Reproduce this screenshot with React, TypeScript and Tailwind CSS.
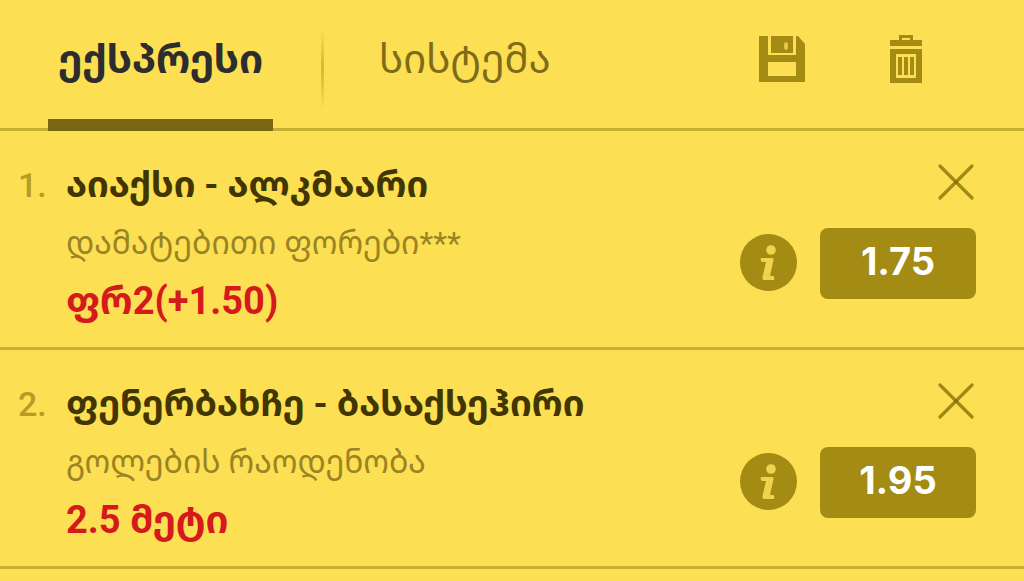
import React from "react";

interface IBet {
  id: number;
  match: string;
  market: string;
  pick: string;
  odds: string;
}

const bets: IBet[] = [
  { id: 1, match: "აიაქსი - ალკმაარი", market: "დამატებითი ფორები***", pick: "ფრ2(+1.50)", odds: "1.75" },
  { id: 2, match: "ფენერბახჩე - ბასაქსეჰირი", market: "გოლების რაოდენობა", pick: "2.5 მეტი", odds: "1.95" },
];

const SaveIcon: React.FC = (): JSX.Element => (
  <svg width="46" height="46" viewBox="0 0 46 46" fill="#a38b14" aria-hidden="true">
    <path fillRule="evenodd" d="M0 0H9V19H37V0H39L46 8V46H0ZM9 26V40H37V26Z" />
    <path d="M12 0H34V17H12Z" />
    <ellipse cx="27" cy="10" rx="2" ry="4" fill="#e5c945" />
  </svg>
);

const TrashIcon: React.FC = (): JSX.Element => (
  <svg width="32" height="48" viewBox="0 0 32 48" fill="#a38b14" aria-hidden="true">
    <path fillRule="evenodd" d="M9 0H23V5H32V11H0V5H9ZM12 3V5H20V3Z" />
    <path fillRule="evenodd" d="M0 14H32V48H0ZM6 19V43H26V19Z" />
    <path d="M8 22H12V40H8ZM14 22H18V40H14ZM20 22H24V40H20Z" />
  </svg>
);

const InfoIcon: React.FC = (): JSX.Element => (
  <svg width="58" height="58" viewBox="0 0 58 58" aria-hidden="true">
    <circle cx="28.5" cy="28.5" r="28.5" fill="#a38b14" />
    <circle cx="31" cy="16" r="4.8" fill="#f0d34d" />
    <path d="M21 24H32Q34 24 33.500 26L30 42H33Q35 42 34 46H24Q22 46 22.500 43L26 28H22Q20 27 21 24Z" fill="#f0d34d" />
  </svg>
);

const CloseIcon: React.FC = (): JSX.Element => (
  <svg width="38" height="36" viewBox="0 0 38 36" fill="none" stroke="#a08914" strokeWidth="3.2" strokeLinecap="round" aria-hidden="true">
    <path d="M2 2L34 34M34 2L2 34" />
    <circle cx="18" cy="18" r="1.5" fill="#85710c" stroke="#85710c" strokeWidth="1" />
  </svg>
);

const BetRow: React.FC<IBet> = (props): JSX.Element => {
  return (
    <li className="flex h-[219px] border-b-[3px] border-[#c9b033] pr-12 pt-8">
      <div className="w-[66px] shrink-0 pl-[18px] text-[34px] leading-[44px] font-medium text-[#b59d25]">{props.id}.</div>
      <div className="min-w-0 flex-1">
        <h2 className="text-[36px] leading-[44px] font-bold whitespace-nowrap text-[#423600]">{props.match}</h2>
        <p className="mt-4 text-[32px] leading-[40px] whitespace-nowrap text-[#9a8424]">{props.market}</p>
        <p className="mt-4 text-[38px] leading-[44px] font-bold whitespace-nowrap text-[#d41a1c]">{props.pick}</p>
      </div>
      <div className="flex shrink-0 flex-col items-end">
        <button type="button" aria-label="წაშლა" className="mt-px">
          <CloseIcon />
        </button>
        <div className="mt-7 flex items-start gap-[22px]">
          <button type="button" aria-label="ინფო" className="pt-1.5">
            <InfoIcon />
          </button>
          <button type="button" className="h-[71px] w-[156px] rounded-lg bg-[#a38b14] pb-1 font-[Inter,sans-serif] text-[38px] font-bold text-white">
            {props.odds}
          </button>
        </div>
      </div>
    </li>
  );
};

const App: React.FC = (): JSX.Element => {
  return (
    <main className="min-h-screen bg-[#fddf53] font-[Roboto,'Noto_Sans_Georgian','DejaVu_Sans',sans-serif]">
      <header className="flex h-[131px] border-b-[3px] border-[#c9b033] pl-12">
        <nav className="flex flex-1">
          <button type="button" className="-mb-[3px] w-[225px] border-b-[12px] border-[#796612] text-[40px] font-bold text-[#2d2d2d]">
            ექსპრესი
          </button>
          <div className="mt-7 ml-12 h-[82px] w-[3px] bg-linear-to-b from-transparent via-[#d9b820] to-transparent" />
          <button type="button" className="ml-[55px] pb-2 text-[40px] text-[#7f6b18]">
            სისტემა
          </button>
        </nav>
        <div className="flex items-center gap-[85px] pr-[102px] pb-2.5">
          <button type="button" aria-label="შენახვა">
            <SaveIcon />
          </button>
          <button type="button" aria-label="გასუფთავება">
            <TrashIcon />
          </button>
        </div>
      </header>
      <ul>
        {bets.map((bet) => (
          <BetRow key={bet.id} {...bet} />
        ))}
      </ul>
    </main>
  );
};

export default App;
